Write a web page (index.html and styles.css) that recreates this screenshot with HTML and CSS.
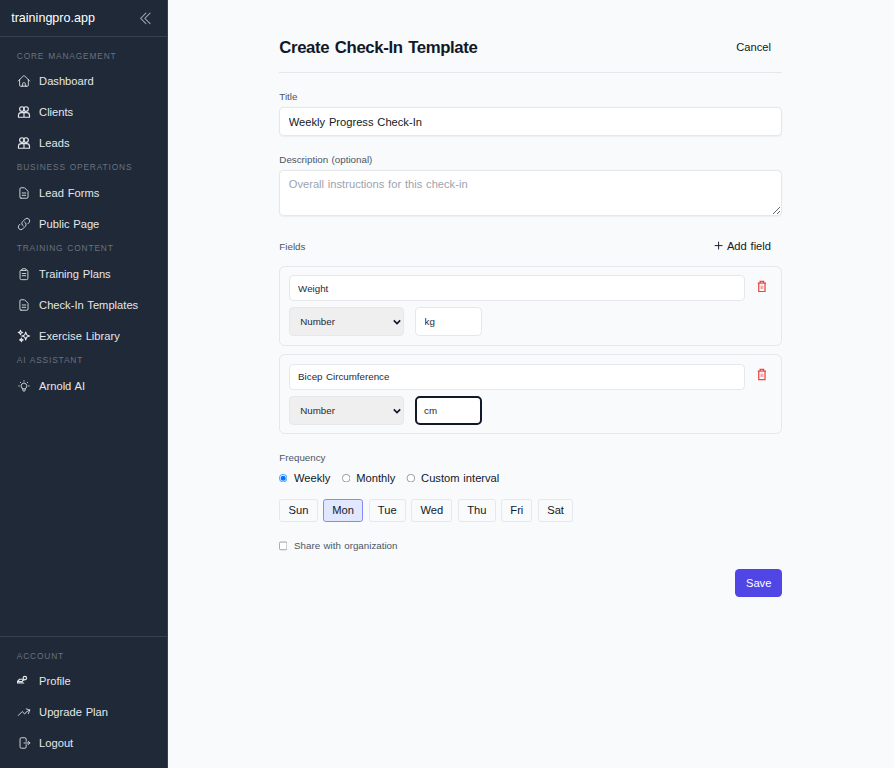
FILE: index.html
```html
<!DOCTYPE html>
<html lang="en">
<head>
<meta charset="utf-8">
<title>Create Check-In Template</title>
<link rel="stylesheet" href="styles.css">
</head>
<body>
<div class="app">
<aside class="sidebar">
  <div class="brand">
    <span class="brand-name">trainingpro.app</span>
    <svg class="collapse" viewBox="0 0 24 24"><path d="M18.75 19.5l-7.5-7.5 7.5-7.5m-6 15L5.25 12l7.5-7.5"/></svg>
  </div>
  <nav class="nav">
    <div class="group">Core Management</div>
    <a class="item"><svg class="ico" viewBox="0 0 24 24"><path d="m2.25 12 8.954-8.955c.44-.439 1.152-.439 1.591 0L21.75 12M4.5 9.75v10.125c0 .621.504 1.125 1.125 1.125H9.75v-4.875c0-.621.504-1.125 1.125-1.125h2.25c.621 0 1.125.504 1.125 1.125V21h4.125c.621 0 1.125-.504 1.125-1.125V9.75M8.25 21h8.25"/></svg><span>Dashboard</span></a>
    <a class="item"><svg class="ico heavy" viewBox="0 0 24 24"><circle cx="8.5" cy="7" r="4"/><circle cx="15.5" cy="7" r="4"/><path d="M2.5 21v-3a5 5 0 0 1 5-5h9a5 5 0 0 1 5 5v3zM12 13v8"/></svg><span>Clients</span></a>
    <a class="item"><svg class="ico heavy" viewBox="0 0 24 24"><circle cx="8.5" cy="7" r="4"/><circle cx="15.5" cy="7" r="4"/><path d="M2.5 21v-3a5 5 0 0 1 5-5h9a5 5 0 0 1 5 5v3zM12 13v8"/></svg><span>Leads</span></a>
    <div class="group">Business Operations</div>
    <a class="item"><svg class="ico" viewBox="0 0 24 24"><path d="M9 12h6M9 16h6M7 21h10a2 2 0 0 0 2-2V9.4a1 1 0 0 0-.3-.7l-5.4-5.4a1 1 0 0 0-.7-.3H7a2 2 0 0 0-2 2v14a2 2 0 0 0 2 2z"/></svg><span>Lead Forms</span></a>
    <a class="item"><svg class="ico" viewBox="0 0 24 24"><path d="M13.19 8.688a4.5 4.5 0 0 1 1.242 7.244l-4.5 4.5a4.5 4.5 0 0 1-6.364-6.364l1.757-1.757m13.35-.622 1.757-1.757a4.5 4.5 0 0 0-6.364-6.364l-4.5 4.5a4.5 4.5 0 0 0 1.242 7.244"/></svg><span>Public Page</span></a>
    <div class="group">Training Content</div>
    <a class="item"><svg class="ico" viewBox="0 0 24 24"><path d="M15.75 5.25h.75a2.25 2.25 0 0 1 2.25 2.25v12a2.25 2.25 0 0 1-2.25 2.25h-9A2.25 2.25 0 0 1 5.25 19.5v-12A2.25 2.25 0 0 1 7.5 5.25h.75M8.25 4.5c0-.83.67-1.5 1.5-1.5h4.5c.83 0 1.5.67 1.5 1.5v1.5h-7.5zM9 11.25h6M9 15h6"/></svg><span>Training Plans</span></a>
    <a class="item"><svg class="ico" viewBox="0 0 24 24"><path d="M9 12h6M9 16h6M7 21h10a2 2 0 0 0 2-2V9.4a1 1 0 0 0-.3-.7l-5.4-5.4a1 1 0 0 0-.7-.3H7a2 2 0 0 0-2 2v14a2 2 0 0 0 2 2z"/></svg><span>Check-In Templates</span></a>
    <a class="item"><svg class="ico heavy" viewBox="0 0 24 24"><path transform="matrix(-1 0 0 1 24 0)" d="M9.813 15.904 9 18.75l-.813-2.846a4.5 4.5 0 0 0-3.09-3.09L2.25 12l2.846-.813a4.5 4.5 0 0 0 3.09-3.09L9 5.25l.813 2.846a4.5 4.5 0 0 0 3.09 3.09L15.75 12l-2.846.813a4.5 4.5 0 0 0-3.09 3.09ZM18.259 8.715 18 9.75l-.259-1.035a3.375 3.375 0 0 0-2.455-2.456L14.25 6l1.036-.259a3.375 3.375 0 0 0 2.455-2.456L18 2.25l.259 1.035a3.375 3.375 0 0 0 2.456 2.456L21.75 6l-1.035.259a3.375 3.375 0 0 0-2.456 2.456ZM16.894 20.567 16.5 21.75l-.394-1.183a2.25 2.25 0 0 0-1.423-1.423L13.5 18.75l1.183-.394a2.25 2.25 0 0 0 1.423-1.423l.394-1.183.394 1.183a2.25 2.25 0 0 0 1.423 1.423l1.183.394-1.183.394a2.25 2.25 0 0 0-1.423 1.423Z"/></svg><span>Exercise Library</span></a>
    <div class="group">AI Assistant</div>
    <a class="item"><svg class="ico" viewBox="0 0 24 24"><path d="M9.663 17h4.673M12 3v1m6.364 1.636l-.707.707M21 12h-1M4 12H3m3.343-5.657l-.707-.707m2.828 9.9a5 5 0 117.072 0l-.548.547A3.374 3.374 0 0014 18.469V19a2 2 0 11-4 0v-.531c0-.895-.356-1.754-.988-2.386l-.548-.547z"/></svg><span>Arnold AI</span></a>
  </nav>
  <div class="account">
    <div class="group">Account</div>
    <a class="item"><svg class="ico heavy" viewBox="0 0 24 24"><circle cx="13.5" cy="7" r="3"/><path d="M.5 13h8.5a3.5 3.5 0 0 1 3-3M.5 13v2.5h11M.5 13l4-4h5"/></svg><span>Profile</span></a>
    <a class="item"><svg class="ico" viewBox="0 0 24 24"><path d="M2.25 18 9 11.25l4.306 4.306a11.95 11.95 0 0 1 5.814-5.518l2.74-1.22m0 0-5.94-2.281m5.94 2.28-2.28 5.941"/></svg><span>Upgrade Plan</span></a>
    <a class="item"><svg class="ico" viewBox="0 0 24 24"><path d="M15.75 9V5.25A2.25 2.25 0 0 0 13.5 3h-6a2.25 2.25 0 0 0-2.25 2.25v13.5A2.25 2.25 0 0 0 7.5 21h6a2.25 2.25 0 0 0 2.25-2.25V15M12 12h10M19 9l3 3-3 3"/></svg><span>Logout</span></a>
  </div>
</aside>
<main class="main">
  <form class="form">
    <header class="head">
      <h1>Create Check-In Template</h1>
      <button type="button" class="ghost">Cancel</button>
    </header>
    <label class="lab lab-t" for="t">Title</label>
    <input id="t" class="in big" value="Weekly Progress Check-In">
    <label class="lab lab-d" for="d">Description (optional)</label>
    <textarea id="d" class="in area" placeholder="Overall instructions for this check-in"></textarea>
    <div class="fields-head">
      <span class="lab-f">Fields</span>
      <button type="button" class="ghost add"><svg class="plus" viewBox="0 0 24 24"><path d="M12 4.5v15M4.5 12h15"/></svg>Add field</button>
    </div>
    <div class="card">
      <div class="card-main">
        <input class="in small" value="Weight">
        <div class="row">
          <select class="sel"><option>Number</option></select>
          <input class="in unit" value="kg">
        </div>
      </div>
      <button type="button" class="del"><svg class="trash" viewBox="0 0 14 18"><path d="M1 4.5h12M4.5 4.5V2h5v2.5M2.5 4.5V16.5h9V4.5"/><rect x="5" y="8" width="4" height="5" class="t-fill"/></svg></button>
    </div>
    <div class="card">
      <div class="card-main">
        <input class="in small" value="Bicep Circumference">
        <div class="row">
          <select class="sel"><option>Number</option></select>
          <input class="in unit focus" value="cm">
        </div>
      </div>
      <button type="button" class="del"><svg class="trash" viewBox="0 0 14 18"><path d="M1 4.5h12M4.5 4.5V2h5v2.5M2.5 4.5V16.5h9V4.5"/><rect x="5" y="8" width="4" height="5" class="t-fill"/></svg></button>
    </div>
    <div class="lab lab-q">Frequency</div>
    <div class="radios">
      <label class="radio"><input type="radio" name="f" checked>Weekly</label>
      <label class="radio"><input type="radio" name="f">Monthly</label>
      <label class="radio"><input type="radio" name="f">Custom interval</label>
    </div>
    <div class="days">
      <button type="button" class="day">Sun</button>
      <button type="button" class="day on">Mon</button>
      <button type="button" class="day">Tue</button>
      <button type="button" class="day">Wed</button>
      <button type="button" class="day">Thu</button>
      <button type="button" class="day">Fri</button>
      <button type="button" class="day">Sat</button>
    </div>
    <label class="share"><input type="checkbox">Share with organization</label>
    <div class="actions"><button type="button" class="save">Save</button></div>
  </form>
</main>
</div>
</body>
</html>
```
FILE: styles.css
```css
*{box-sizing:border-box}
html,body{margin:0;height:100%;overflow:hidden}
body{font-family:"Liberation Sans",Arial,sans-serif;background:#f9fafb;color:#111827;word-spacing:1px}
.app{display:flex;width:1280px;height:1100px;zoom:.6984;font-size:16px}
.sidebar{width:240px;flex:none;background:#1f2937;border-right:1px solid #374151;display:flex;flex-direction:column;color:#e5e7eb}
.brand{height:53px;flex:none;border-bottom:1px solid #374151;display:flex;align-items:center;justify-content:space-between;padding:0 18px 0 16px}
.brand-name{font-size:18px;color:#fff}
.collapse{width:24px;height:24px;fill:none;stroke:#9ca3af;stroke-width:1.5;stroke-linecap:round;stroke-linejoin:round}
.nav{flex:1;padding-top:13.7px}
.group{font-size:12px;line-height:16px;letter-spacing:.1em;text-transform:uppercase;color:#6b7280;padding:0 24px;margin:6px 0}
.item{display:flex;align-items:center;height:44px;padding-left:24px;font-size:16px;color:#e5e7eb;gap:12px}
.ico{width:20px;height:20px;flex:none;fill:none;stroke:#e5e7eb;stroke-width:1.5;stroke-linejoin:round;stroke-linecap:round}
.heavy{stroke-width:2}
.account{flex:none;border-top:1px solid #374151;padding:14px 0 14.4px}
.main{flex:1;min-width:0;padding:47px 24px 0}
.form{max-width:720px;margin:0 auto}
.head{display:flex;justify-content:space-between;align-items:center;border-bottom:1px solid #e5e7eb;padding:1px 0 15px;margin-bottom:25px}
h1{margin:0;padding-top:2px;font-size:24px;line-height:32px;font-weight:700;letter-spacing:-.55px;word-spacing:2px;color:#111827}
.ghost{height:40px;border:0;background:none;font:inherit;font-size:16px;word-spacing:1px;color:#111827;padding:0 16px}
.add{display:flex;align-items:center;gap:4px}
.plus{width:16px;height:16px;fill:none;stroke:#111827;stroke-width:2;stroke-linecap:round}
.lab{display:block;font-size:14px;line-height:20px;color:#4b5563;margin-bottom:4px}
.lab-d{margin-top:24px}
.in{display:block;width:100%;background:#fff;border:1px solid #e5e7eb;border-radius:6px;font-family:inherit;word-spacing:1px;color:#111827;outline:0}
.big{height:42px;padding:0 12px;font-size:16px;box-shadow:0 1px 2px rgba(0,0,0,.05)}
.area{height:66px;padding:7px 12px;font-size:16px;line-height:24px;resize:vertical;box-shadow:0 1px 2px rgba(0,0,0,.05)}
.area::placeholder{color:#9ca3af}
.fields-head{display:flex;justify-content:space-between;align-items:center;margin:23px 0 8px}
.lab-f{font-size:14px;color:#4b5563}
.card{display:flex;gap:8px;border:1px solid #e5e7eb;border-radius:8px;padding:12px;margin-bottom:12px}
.card-main{flex:1;min-width:0}
.small{height:38px;padding:0 12px;font-size:14px;color:#1f2937}
.row{display:flex;gap:16px;margin-top:8px}
.sel{appearance:none;width:165px;height:42px;background:#efefef url("data:image/svg+xml,%3Csvg xmlns='http://www.w3.org/2000/svg' viewBox='0 0 10 7'%3E%3Cpath d='M1 1.5l4 4 4-4' fill='none' stroke='%23111827' stroke-width='2'/%3E%3C/svg%3E") no-repeat right 3px center/11px 8px;border:1px solid #e5e7eb;border-radius:6px;font:14px "Liberation Sans",Arial,sans-serif;color:#1f2937;padding-left:15px}
.unit{width:96px;height:42px;padding:0 12px;font-size:14px;color:#1f2937}
.focus{border:3px solid #111827;padding:0 10px;border-radius:7px}
.del{width:32px;height:32px;flex:none;border:0;background:none;padding:0;display:flex;align-items:center;justify-content:center}
.trash{width:14px;height:18px;fill:none;stroke:#ef4444;stroke-width:1.8}
.t-fill{fill:#ef4444;stroke:none;opacity:.45}
.lab-q{margin-top:24px;margin-bottom:7px}
.radios{display:flex;gap:16px;font-size:16px;line-height:24px}
.radio{display:flex;align-items:center;gap:8px}
.radio input{margin:0}
.days{display:flex;gap:8px;margin-top:17px}
.day{height:34px;padding:0 11.7px;border:1px solid #e5e7eb;border-radius:4px;background:#f9fafb;font:16px "Liberation Sans",Arial,sans-serif;color:#111827}
.on{background:#e0e7ff;border-color:#818cf8}
.share{display:flex;align-items:center;gap:8px;font-size:14px;line-height:20px;color:#4b5563;margin-top:24px}
.share input{margin:0}
.actions{display:flex;justify-content:flex-end;margin-top:23px}
.save{height:40px;padding:0 15.5px;border:0;border-radius:6px;background:#4f46e5;color:#fff;font:16px "Liberation Sans",Arial,sans-serif}
```
